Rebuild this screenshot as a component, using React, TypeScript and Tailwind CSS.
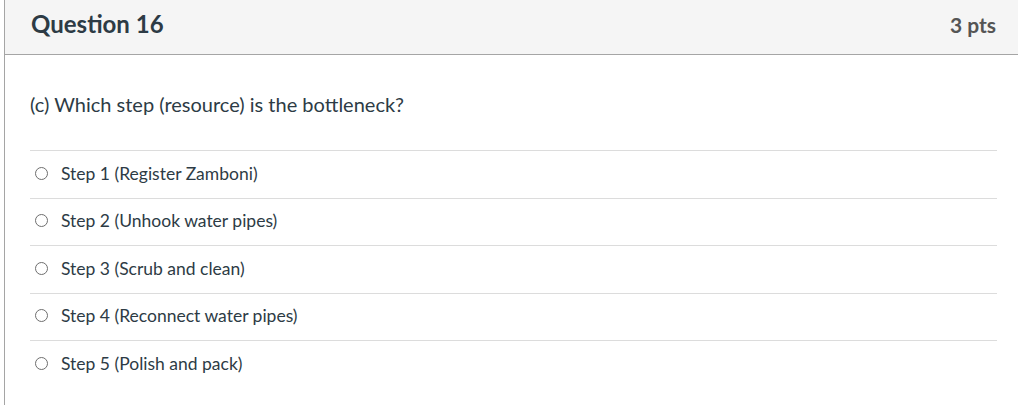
const answers = [
  "Step 1 (Register Zamboni)",
  "Step 2 (Unhook water pipes)",
  "Step 3 (Scrub and clean)",
  "Step 4 (Reconnect water pipes)",
  "Step 5 (Polish and pack)",
];

export default function App() {
  return (
    <div className="h-[405px] bg-white pl-1 font-['Lato',sans-serif] text-[#2d3b45]">
      <div className="h-full border-l border-[#a5a5a5]">
        {/* Header */}
        <div className="flex h-[55px] items-center justify-between border-b border-[#a5a5a5] bg-[#f5f5f5] pb-[6px] pl-[26px] pr-[22px]">
          <h2 className="text-[24px] font-bold leading-none">Question 16</h2>
          <span className="text-[21px] font-bold leading-none text-[#555]">3 pts</span>
        </div>

        {/* Body */}
        <div className="pl-[25px] pr-[21px]">
          <p className="pt-[38px] pb-[35px] text-[20px] leading-[22px]">
            (c) Which step (resource) is the bottleneck?
          </p>
          <div className="flex flex-col">
            {answers.map((a) => (
              <label
                key={a}
                className="flex h-[47.5px] items-center gap-[13px] border-t border-[#dcdcdc] pb-[2px] pl-[5px] text-[17.5px]"
              >
                <span className="h-[13px] w-[13px] rounded-full border border-[#6e6e6e] bg-white" />
                <span className="leading-none">{a}</span>
              </label>
            ))}
          </div>
        </div>
      </div>
    </div>
  );
}
